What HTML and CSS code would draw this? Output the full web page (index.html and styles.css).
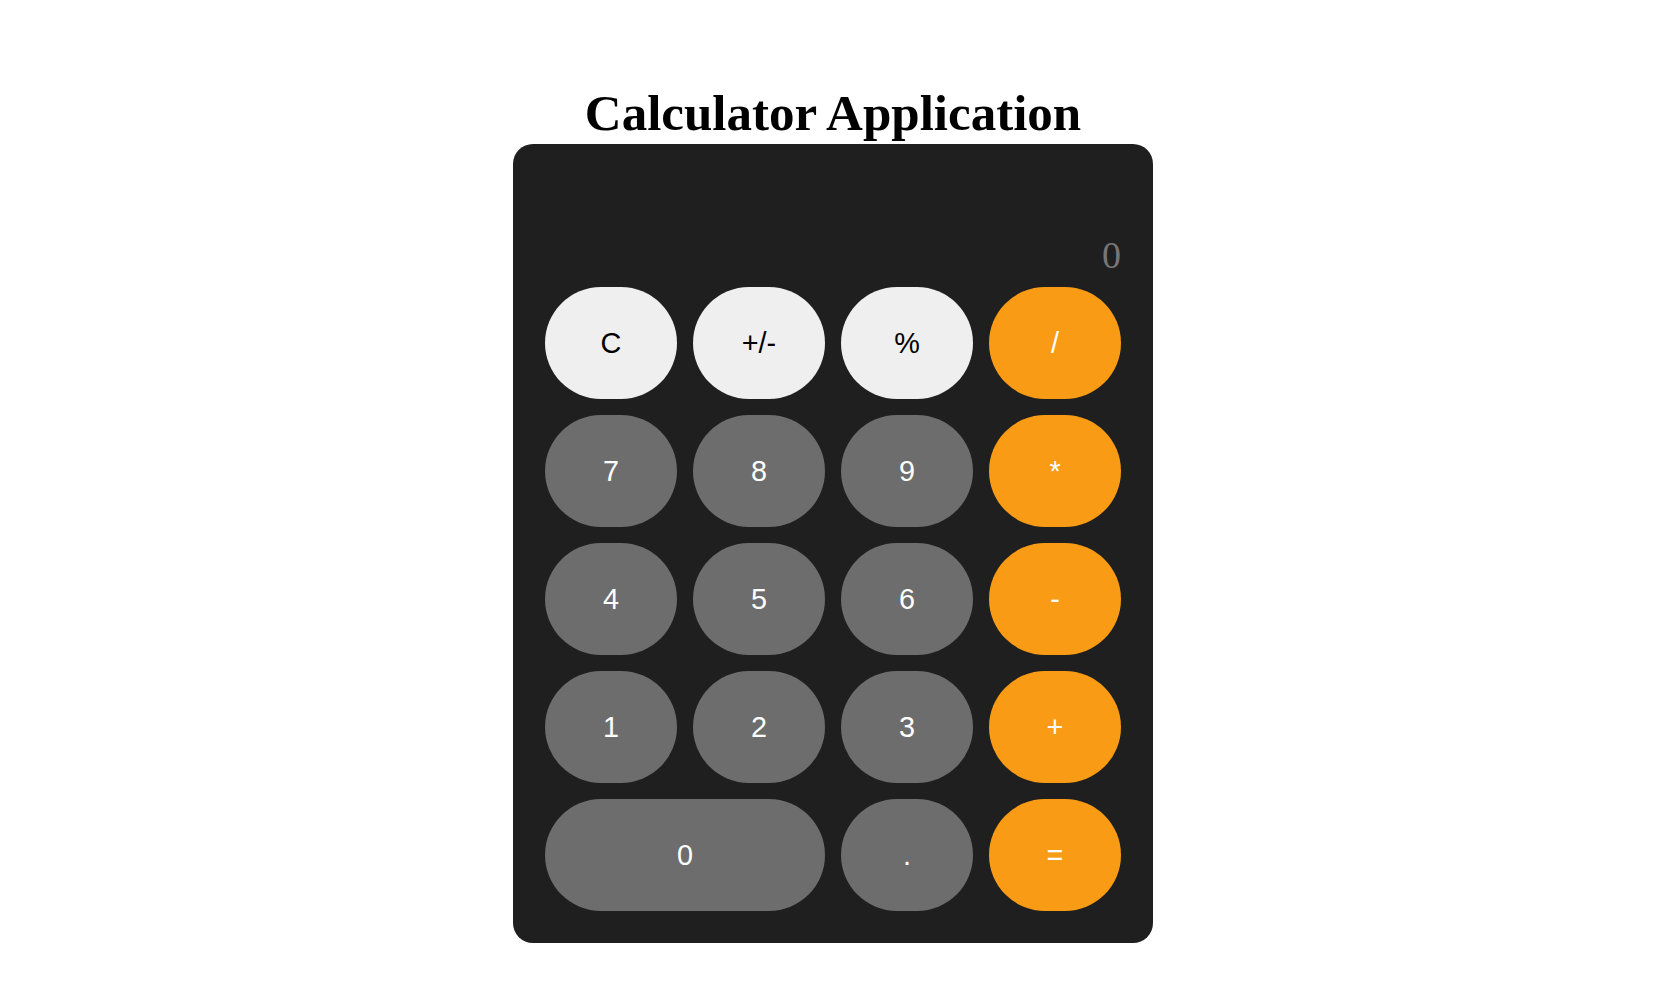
FILE: index.html
```html
<!DOCTYPE html>
<html lang="en">
<head>
<meta charset="utf-8">
<title>Calculator Application</title>
<link rel="stylesheet" href="styles.css">
</head>
<body>
<main class="page">
  <h1 class="title">Calculator Application</h1>
  <div class="calculator">
    <div class="display">0</div>
    <button class="key key-light">C</button>
    <button class="key key-light">+/-</button>
    <button class="key key-light">%</button>
    <button class="key key-op">/</button>
    <button class="key key-num">7</button>
    <button class="key key-num">8</button>
    <button class="key key-num">9</button>
    <button class="key key-op">*</button>
    <button class="key key-num">4</button>
    <button class="key key-num">5</button>
    <button class="key key-num">6</button>
    <button class="key key-op">-</button>
    <button class="key key-num">1</button>
    <button class="key key-num">2</button>
    <button class="key key-num">3</button>
    <button class="key key-op">+</button>
    <button class="key key-num key-wide">0</button>
    <button class="key key-num">.</button>
    <button class="key key-op">=</button>
  </div>
</main>
</body>
</html>
```

FILE: styles.css
```css
html, body {
  margin: 0;
  padding: 0;
  background: #ffffff;
}

.page {
  display: flex;
  flex-direction: column;
  align-items: center;
  padding: 86px 12px 0 0;
}

.title {
  margin: 0 0 3px;
  font-family: "Liberation Serif", "Times New Roman", serif;
  font-weight: bold;
  font-size: 51px;
  line-height: 55px;
  color: #000;
}

.calculator {
  display: grid;
  grid-template-columns: repeat(4, 132px);
  grid-template-rows: 95px repeat(5, 112px);
  gap: 16px;
  padding: 32px;
  background: #1f1f1f;
  border-radius: 20px;
}

.display {
  grid-column: 1 / span 4;
  display: flex;
  justify-content: flex-end;
  align-items: flex-end;
  font-family: "Liberation Serif", "Times New Roman", serif;
  font-size: 38px;
  line-height: 31px;
  color: #767676;
}

.key {
  border: none;
  border-radius: 100px;
  font-family: "Liberation Sans", Arial, sans-serif;
  font-size: 28.8px;
  padding: 0;
  cursor: pointer;
}

.key-light {
  background: #efefef;
  color: #000;
}

.key-num {
  background: #6d6d6d;
  color: #fff;
}

.key-op {
  background: #f99b14;
  color: #fff;
}

.key-wide {
  grid-column: span 2;
}
```
